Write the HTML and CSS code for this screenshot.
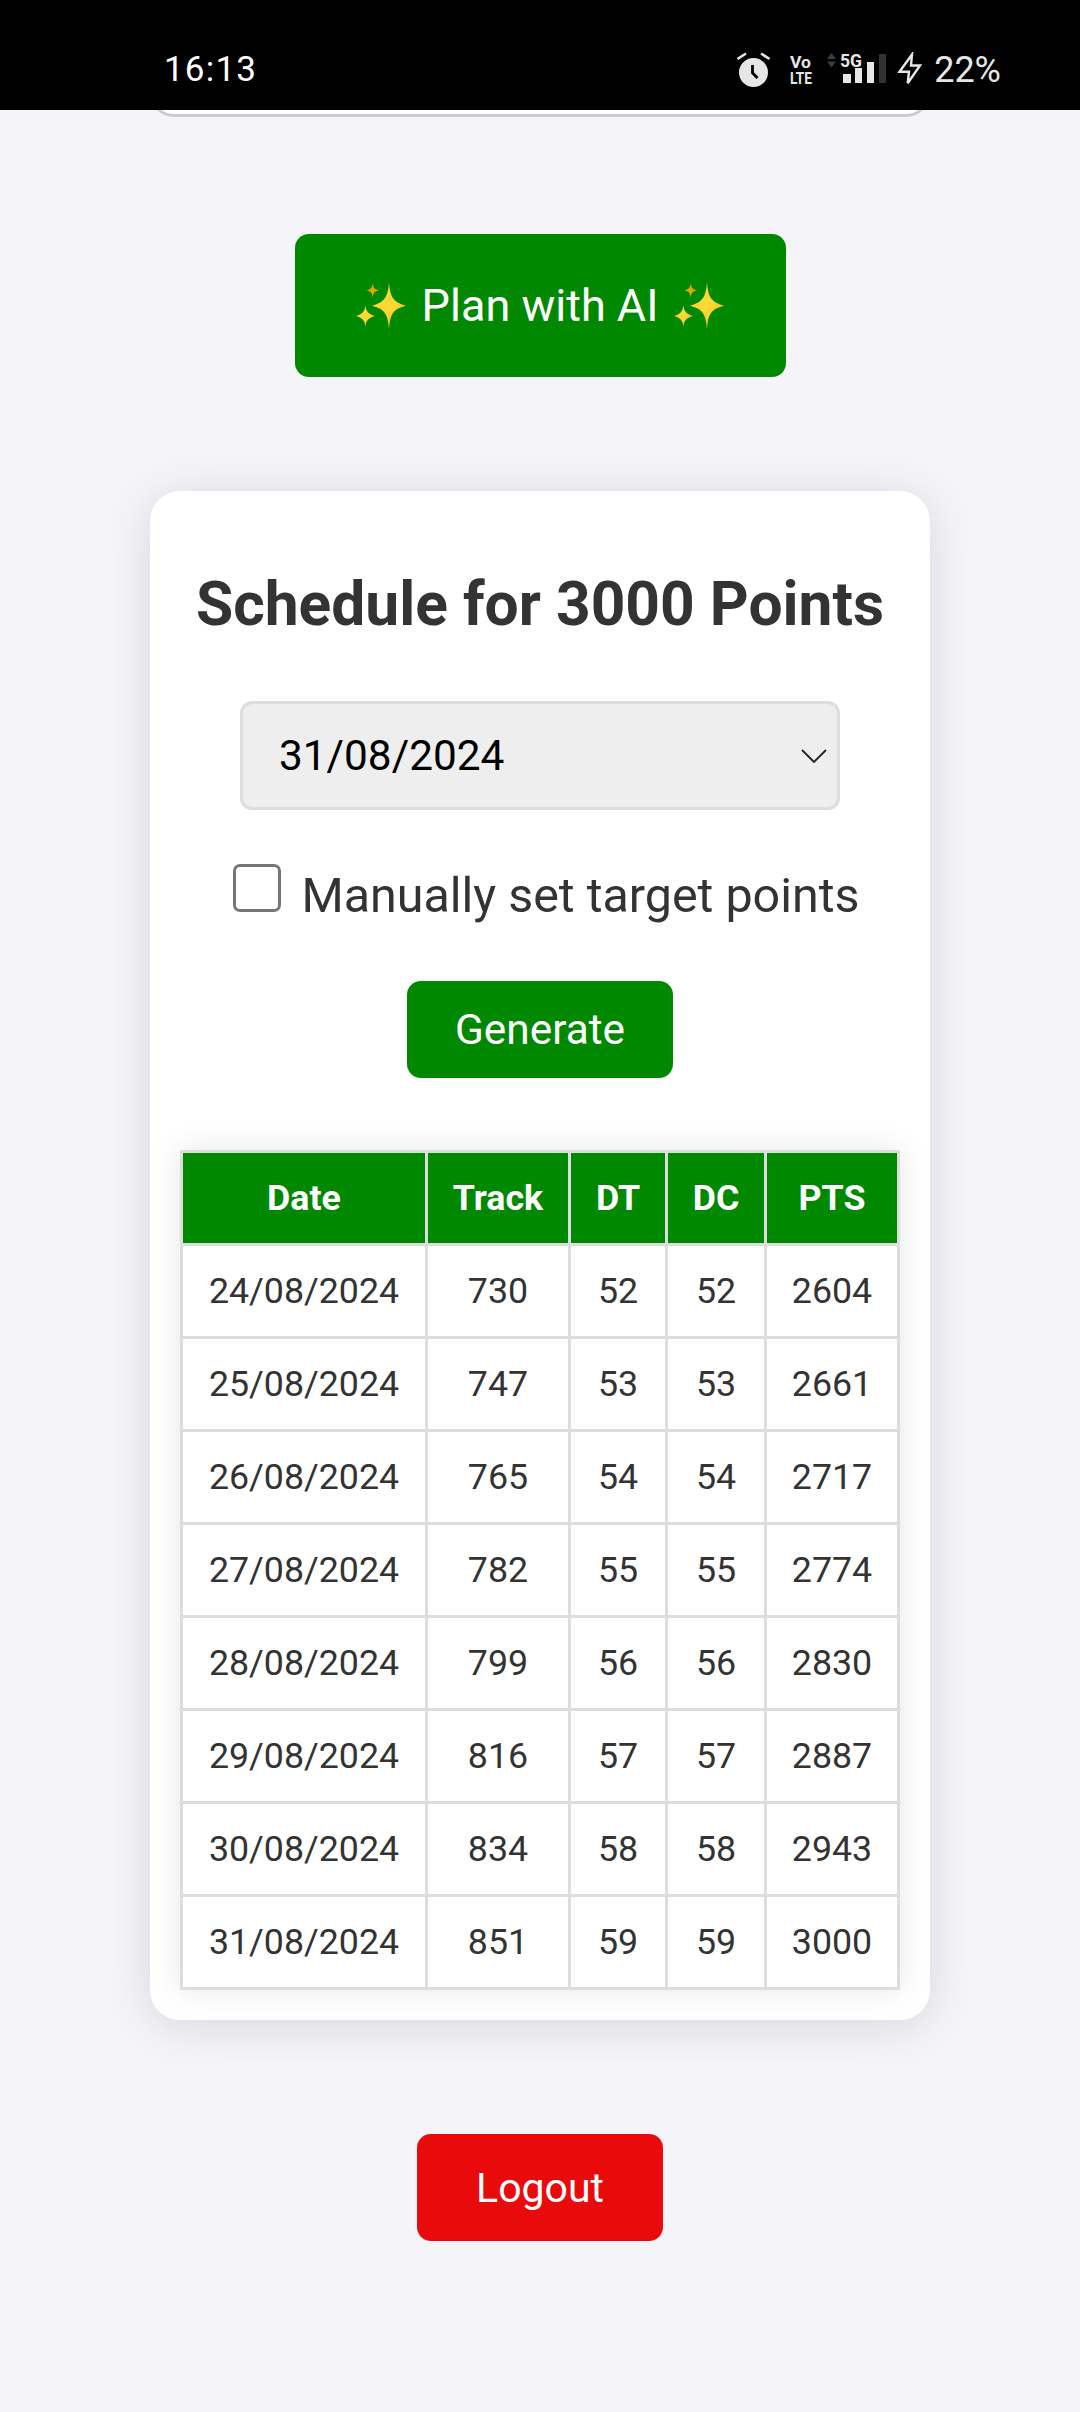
FILE: index.html
```html
<!DOCTYPE html>
<html lang="en">
<head>
    <meta charset="UTF-8">
    <meta name="viewport" content="width=device-width, initial-scale=1.0">
    <title>Schedule</title>
    <link rel="stylesheet" href="styles.css">
</head>
<body>
    <div class="status-bar">
        <span class="clock">16:13</span>
        <div class="status-icons">
            <svg class="icon-alarm" width="33" height="35" viewBox="0 0 33 35">
                <circle cx="16.500" cy="20.500" r="14.500" fill="#e6e6e6"/>
                <path d="M.5 7 9 1.500M32.500 7 24 1.500" stroke="#e6e6e6" stroke-width="2.600" fill="none"/>
                <path d="M15.500 13v8l5 5" stroke="#000" stroke-width="2.800" fill="none"/>
            </svg>
            <svg class="icon-volte" width="34" height="43" viewBox="0 -4 34 43">
                <text x="1" y="15.500" font-family="Roboto" font-weight="700" font-size="17" fill="#e6e6e6" textLength="21" lengthAdjust="spacingAndGlyphs">Vo</text>
                <text x="1" y="31.500" font-family="Roboto" font-weight="700" font-size="17" fill="#e6e6e6" textLength="22" lengthAdjust="spacingAndGlyphs">LTE</text>
            </svg>
            <svg class="icon-signal" width="61" height="43" viewBox="0 -4 61 43">
                <path d="M1 7 5.500 1l4.500 6z" fill="#3c3c3c"/>
                <path d="M1 9.500h9l-4.500 6z" fill="#3c3c3c"/>
                <text x="14" y="14.500" font-family="Roboto" font-weight="700" font-size="18" fill="#e6e6e6" textLength="22" lengthAdjust="spacingAndGlyphs">5G</text>
                <rect x="17" y="22" width="8" height="9" fill="#e6e6e6"/>
                <rect x="29" y="16" width="7" height="15" fill="#e6e6e6"/>
                <rect x="41" y="10" width="7" height="21" fill="#e6e6e6"/>
                <rect x="53" y="2" width="7" height="29" rx="1" fill="#333"/>
            </svg>
            <svg class="icon-bolt" width="28" height="35" viewBox="0 0 28 35">
                <path d="M16 2.500 3.500 19.700h9.500l-1.300 11.500L24 13.500h-9z" fill="none" stroke="#e6e6e6" stroke-width="2.400"/>
            </svg>
            <span class="battery">22%</span>
        </div>
    </div>

    <div class="prev-clip">
        <div class="prev-card"></div>
    </div>

    <svg class="defs" width="0" height="0">
        <defs>
            <linearGradient id="star-fill" x1="0.300" y1="0.200" x2="0.900" y2="0.900">
                <stop offset="0.500" stop-color="#fdd835"/>
                <stop offset="1" stop-color="#f2a900"/>
            </linearGradient>
            <g id="sparkles">
                <path d="M33 0c1 14 3.500 20 17 23.700C36.500 27 34 33 33 47.500 32 33 29.500 27 16 23.700 29.500 20 32 14 33 0z" fill="url(#star-fill)"/>
                <path d="M16.700 1c.5 5 1.800 6.300 6.500 7.300-4.700 1-6 2.500-6.500 7.500-.5-5-1.800-6.500-6.500-7.500 4.700-1 6-2.300 6.500-7.300z" fill="#e0a800"/>
                <path d="M9.400 23c.5 6 2.500 9 9.700 11-7.200 2-9.200 5-9.700 11-.5-6-2.500-9-9.400-11 6.900-2 8.900-5 9.400-11z" fill="url(#star-fill)"/>
            </g>
        </defs>
    </svg>

    <button class="btn btn-plan" type="button">
        <svg width="50" height="48" viewBox="0 0 50 48"><use href="#sparkles"/></svg>
        Plan with AI
        <svg width="50" height="48" viewBox="0 0 50 48"><use href="#sparkles"/></svg>
    </button>

    <div class="card">
        <h2>Schedule for 3000 Points</h2>
        <div class="date-select">
            <span>31/08/2024</span>
            <svg width="26" height="14" viewBox="0 0 26 14"><path d="M1 1l12 12L25 1" fill="none" stroke="#222" stroke-width="1.800"/></svg>
        </div>
        <label class="manual-row">
            <span class="checkbox"></span>
            Manually set target points
        </label>
        <button class="btn btn-generate" type="button">Generate</button>
        <table>
            <colgroup>
                <col class="col-date"><col class="col-track"><col class="col-dt"><col class="col-dc"><col class="col-pts">
            </colgroup>
            <thead>
                <tr><th>Date</th><th>Track</th><th>DT</th><th>DC</th><th>PTS</th></tr>
            </thead>
            <tbody>
                <tr><td>24/08/2024</td><td>730</td><td>52</td><td>52</td><td>2604</td></tr>
                <tr><td>25/08/2024</td><td>747</td><td>53</td><td>53</td><td>2661</td></tr>
                <tr><td>26/08/2024</td><td>765</td><td>54</td><td>54</td><td>2717</td></tr>
                <tr><td>27/08/2024</td><td>782</td><td>55</td><td>55</td><td>2774</td></tr>
                <tr><td>28/08/2024</td><td>799</td><td>56</td><td>56</td><td>2830</td></tr>
                <tr><td>29/08/2024</td><td>816</td><td>57</td><td>57</td><td>2887</td></tr>
                <tr><td>30/08/2024</td><td>834</td><td>58</td><td>58</td><td>2943</td></tr>
                <tr><td>31/08/2024</td><td>851</td><td>59</td><td>59</td><td>3000</td></tr>
            </tbody>
        </table>
    </div>

    <button class="btn btn-logout" type="button">Logout</button>
</body>
</html>
```

FILE: styles.css
```css
html, body {
    margin: 0;
    padding: 0;
}
body {
    height: 2412px;
    overflow: hidden;
    display: flex;
    flex-direction: column;
    align-items: center;
    font-family: Roboto, sans-serif;
    color: #333;
    background-color: #f4f4f9;
}
.status-bar {
    align-self: stretch;
    height: 110px;
    flex: none;
    background-color: #000;
    color: #e6e6e6;
    display: flex;
    justify-content: space-between;
    align-items: center;
    padding: 29px 79px 0 164px;
    box-sizing: border-box;
}
.clock {
    font-size: 35px;
    letter-spacing: 1.200px;
    color: #fff;
}
.status-icons {
    display: flex;
    align-items: center;
}
.icon-volte {
    margin: 0 -10px 0 19px;
}
.icon-signal {
    margin-left: 13px;
}
.icon-bolt {
    margin-left: 9px;
}
.battery {
    font-size: 36px;
    margin-left: 10px;
}
.prev-clip {
    flex: none;
    width: 780px;
    height: 7px;
    overflow: hidden;
}
.prev-card {
    height: 60px;
    margin-top: -53px;
    box-sizing: border-box;
    background-color: #fff;
    border: 3px solid #ccc;
    border-radius: 24px;
}
.btn {
    flex: none;
    display: block;
    border: none;
    color: #fff;
    font-family: Roboto, sans-serif;
    border-radius: 14px;
    padding: 0;
}
.btn-plan {
    display: flex;
    align-items: center;
    justify-content: center;
    gap: 16px;
    width: 491px;
    height: 143px;
    margin-top: 117px;
    font-size: 45px;
    background-color: #008800;
}
.defs {
    position: absolute;
}
.card {
    flex: none;
    width: 780px;
    height: 1529px;
    margin-top: 114px;
    box-sizing: border-box;
    padding: 0 30px;
    background-color: #fff;
    border-radius: 30px;
    box-shadow: 0 6px 48px rgba(0, 0, 0, 0.12);
    display: flex;
    flex-direction: column;
    align-items: center;
}
h2 {
    margin: 80px 0 0;
    font-size: 60.500px;
    line-height: 68px;
    font-weight: 700;
    white-space: nowrap;
}
.date-select {
    width: 600px;
    height: 109px;
    margin-top: 62px;
    box-sizing: border-box;
    padding: 0 10px 0 36px;
    display: flex;
    justify-content: space-between;
    align-items: center;
    font-size: 42.350px;
    color: #000;
    background-color: #eee;
    border: 3px solid #ddd;
    border-radius: 12px;
}
.manual-row {
    display: flex;
    align-items: center;
    margin-top: 57px;
    height: 56px;
    font-size: 48.400px;
    white-space: nowrap;
}
.checkbox {
    width: 48px;
    height: 48px;
    box-sizing: border-box;
    margin: -14px 20px 0 13px;
    background-color: #fff;
    border: 3px solid #767676;
    border-radius: 7px;
}
.btn-generate {
    width: 266px;
    height: 97px;
    margin-top: 58px;
    font-size: 42.350px;
    background-color: #008800;
}
table {
    width: 720px;
    margin-top: 72px;
    table-layout: fixed;
    border-collapse: separate;
    border-spacing: 0;
    border-top: 3px solid #ddd;
    border-left: 3px solid #ddd;
    box-shadow: 0 0 30px rgba(0, 0, 0, 0.1);
}
.col-date { width: 245px; }
.col-track { width: 143px; }
.col-dt { width: 97px; }
.col-dc { width: 99px; }
.col-pts { width: 133px; }
th, td {
    height: 93px;
    padding: 0;
    box-sizing: border-box;
    text-align: center;
    border-right: 3px solid #ddd;
    border-bottom: 3px solid #ddd;
    font-size: 35.750px;
    background-color: #fff;
}
th {
    color: #fff;
    font-weight: 700;
    background-color: #008800;
}
.btn-logout {
    width: 246px;
    height: 107px;
    margin-top: 114px;
    font-size: 41px;
    background-color: #e90b0b;
}
```
